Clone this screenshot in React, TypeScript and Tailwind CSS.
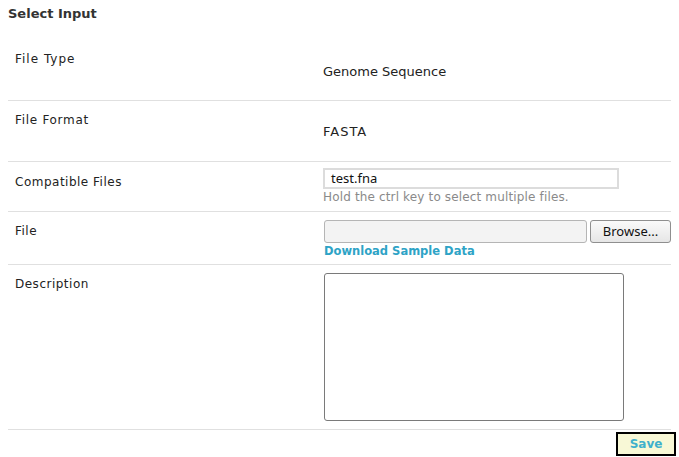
import React from 'react';

const rowLine = 'mx-2 border-b border-[#e0e0e0]';
const label = 'w-[315px] pl-[7px] tracking-[0.5px] text-[#222]';

export default function App() {
  return (
    <div className="w-[679px] h-[457px] bg-white text-[#333] font-['DejaVu_Sans',Verdana,sans-serif] text-[12px] overflow-hidden">
      <div className="px-2 pt-[4px] h-[26px] font-bold text-[13px] text-[#333]">Select Input</div>

      {/* File Type */}
      <div className={`${rowLine} h-[75px] flex`}>
        <div className={`${label} pt-[24px] tracking-[1px]`}>File Type</div>
        <div className="pt-[36px] text-[13px] text-[#222]">Genome Sequence</div>
      </div>

      {/* File Format */}
      <div className={`${rowLine} h-[61px] flex`}>
        <div className={`${label} pt-[10px] tracking-[0.7px]`}>File Format</div>
        <div className="pt-[21px] text-[13px] tracking-[1px] text-[#222]">FASTA</div>
      </div>

      {/* Compatible Files */}
      <div className={`${rowLine} h-[50px] flex`}>
        <div className={`${label} pt-[11px] tracking-[0.4px]`}>Compatible Files</div>
        <div className="pt-[6px]">
          <div className="w-[296px] h-[21px] border-2 border-[#dcdcdc] pl-[6px] text-[13px] leading-[17px] text-[#111] font-['Noto_Sans',sans-serif]">test.fna</div>
          <div className="text-[12px] tracking-[0.15px] text-[#8a8a8a] leading-[17px]">Hold the ctrl key to select multiple files.</div>
        </div>
      </div>

      {/* File */}
      <div className={`${rowLine} h-[53px] flex`}>
        <div className={`${label} w-[316px] pt-[10px]`}>File</div>
        <div className="pt-[8px]">
          <div className="flex gap-[3px]">
            <div className="w-[263px] h-[23px] rounded-[3px] border border-[#b5b5b5] bg-[#f3f3f3]" />
            <button className="w-[81px] h-[23px] rounded-[3px] border border-[#8f8f8f] bg-gradient-to-b from-[#fafafa] to-[#e6e6e6] text-[13px] text-[#111] font-['Noto_Sans',sans-serif] leading-none">Browse...</button>
          </div>
          <div className="font-bold text-[11.5px] leading-[16px] text-[#2ea3c6]">Download Sample Data</div>
        </div>
      </div>

      {/* Description */}
      <div className={`${rowLine} h-[165px] flex`}>
        <div className={`${label} w-[316px] pt-[10px] tracking-[0.4px]`}>Description</div>
        <div className="pt-[8px]">
          <textarea className="block w-[300px] h-[148px] rounded-[3px] border border-[#7a7a7a] resize-none outline-none" />
        </div>
      </div>

      <div className="flex justify-end pr-[3px] pt-[2px]">
        <button className="w-[60px] h-[24px] border-2 border-black bg-[#f8f8d6] font-bold text-[12px] text-[#3fb0cc]">Save</button>
      </div>
    </div>
  );
}
